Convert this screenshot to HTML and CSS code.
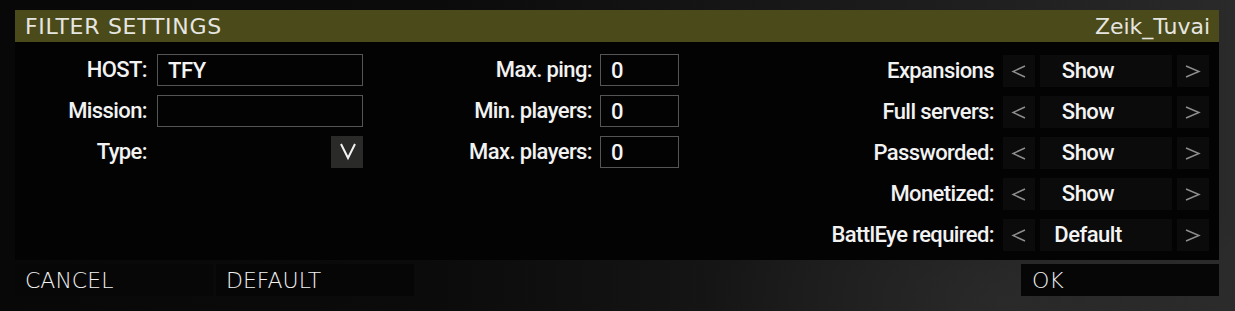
FILE: index.html
```html
<!DOCTYPE html>
<html>
<head>
<meta charset="utf-8">
<link rel="stylesheet" href="styles.css">
</head>
<body>
<div class="dialog">
  <div class="titlebar">
    <span class="title">FILTER SETTINGS</span>
    <span class="user">Zeik_Tuvai</span>
  </div>
  <div class="panel">
    <div class="group g1">
      <label class="lbl">HOST:</label>
      <input class="field" type="text" value="TFY">
      <label class="lbl">Mission:</label>
      <input class="field" type="text" value="">
      <label class="lbl">Type:</label>
      <div class="typecell">
        <button class="combo">
          <svg width="32" height="32" viewBox="0 0 32 32"><polyline points="10,8 17,22 24,8" fill="none" stroke="#f2f2f2" stroke-width="2"/></svg>
        </button>
      </div>
    </div>
    <div class="group g2">
      <label class="lbl">Max. ping:</label>
      <input class="field" type="text" value="0">
      <label class="lbl">Min. players:</label>
      <input class="field" type="text" value="0">
      <label class="lbl">Max. players:</label>
      <input class="field" type="text" value="0">
    </div>
    <div class="group g3">
      <label class="lbl">Expansions</label>
      <div class="selector">
        <span class="arrow"><svg width="32" height="32" viewBox="0 0 32 32"><polyline points="22,11 10,16.5 22,22" fill="none" stroke="#8e8e8e" stroke-width="1.4"/></svg></span>
        <span class="value">Show</span>
        <span class="arrow"><svg width="32" height="32" viewBox="0 0 32 32"><polyline points="9,11 22,16.5 9,22" fill="none" stroke="#8e8e8e" stroke-width="1.4"/></svg></span>
      </div>
      <label class="lbl">Full servers:</label>
      <div class="selector">
        <span class="arrow"><svg width="32" height="32" viewBox="0 0 32 32"><polyline points="22,11 10,16.5 22,22" fill="none" stroke="#8e8e8e" stroke-width="1.4"/></svg></span>
        <span class="value">Show</span>
        <span class="arrow"><svg width="32" height="32" viewBox="0 0 32 32"><polyline points="9,11 22,16.5 9,22" fill="none" stroke="#8e8e8e" stroke-width="1.4"/></svg></span>
      </div>
      <label class="lbl">Passworded:</label>
      <div class="selector">
        <span class="arrow"><svg width="32" height="32" viewBox="0 0 32 32"><polyline points="22,11 10,16.5 22,22" fill="none" stroke="#8e8e8e" stroke-width="1.4"/></svg></span>
        <span class="value">Show</span>
        <span class="arrow"><svg width="32" height="32" viewBox="0 0 32 32"><polyline points="9,11 22,16.5 9,22" fill="none" stroke="#8e8e8e" stroke-width="1.4"/></svg></span>
      </div>
      <label class="lbl">Monetized:</label>
      <div class="selector">
        <span class="arrow"><svg width="32" height="32" viewBox="0 0 32 32"><polyline points="22,11 10,16.5 22,22" fill="none" stroke="#8e8e8e" stroke-width="1.4"/></svg></span>
        <span class="value">Show</span>
        <span class="arrow"><svg width="32" height="32" viewBox="0 0 32 32"><polyline points="9,11 22,16.5 9,22" fill="none" stroke="#8e8e8e" stroke-width="1.4"/></svg></span>
      </div>
      <label class="lbl">BattlEye required:</label>
      <div class="selector">
        <span class="arrow"><svg width="32" height="32" viewBox="0 0 32 32"><polyline points="22,11 10,16.5 22,22" fill="none" stroke="#8e8e8e" stroke-width="1.4"/></svg></span>
        <span class="value">Default</span>
        <span class="arrow"><svg width="32" height="32" viewBox="0 0 32 32"><polyline points="9,11 22,16.5 9,22" fill="none" stroke="#8e8e8e" stroke-width="1.4"/></svg></span>
      </div>
    </div>
  </div>
  <div class="actions">
    <button class="btn btn-cancel">CANCEL</button>
    <button class="btn btn-default">DEFAULT</button>
    <span class="spacer"></span>
    <button class="btn btn-ok">OK</button>
  </div>
</div>
</body>
</html>
```
FILE: styles.css
```css
* { box-sizing: border-box; }
html, body { margin: 0; padding: 0; }
body {
  width: 1235px;
  height: 311px;
  overflow: hidden;
  background:
    radial-gradient(ellipse 420px 200px at 1000px 300px, rgba(60,60,60,0.35), rgba(0,0,0,0) 70%),
    linear-gradient(90deg, #080808 0%, #0b0b0b 35%, #161616 60%, #222222 85%, #2a2a2a 100%);
  font-family: Roboto, "Liberation Sans", sans-serif;
  color: #f2f2f2;
}
.dialog {
  padding: 10px 16px 0 15px;
}
.titlebar {
  height: 32px;
  background: #4b4a1a;
  display: flex;
  align-items: center;
  justify-content: space-between;
  padding: 0 9px 0 10px;
  font-family: "DejaVu Sans", sans-serif;
  font-size: 22px;
  color: #e6e6e0;
}
.title { letter-spacing: 0.7px; }
.panel {
  height: 218px;
  background: #030303;
  display: flex;
  padding: 12px 10px 10px 0;
}
.group {
  display: grid;
  row-gap: 9px;
  grid-auto-rows: 32px;
  align-content: start;
}
.g1 { grid-template-columns: 132px 206px; column-gap: 10px; }
.g2 { grid-template-columns: 229px 79px; column-gap: 8px; }
.g3 { grid-template-columns: 315px 206px; column-gap: 9px; margin-top: 1px; }
.lbl {
  font-size: 22px;
  font-weight: 500;
  letter-spacing: -0.6px;
  text-align: right;
  line-height: 32px;
  white-space: nowrap;
  color: #f2f2f2;
}
.field {
  height: 32px;
  width: 100%;
  margin: 0;
  border: 1px solid #555555;
  background: transparent;
  color: #f4f4f4;
  font-family: Roboto, "Liberation Sans", sans-serif;
  font-size: 22px;
  font-weight: 500;
  letter-spacing: -0.4px;
  padding: 0 0 0 10px;
  outline: none;
}
.typecell {
  display: flex;
  justify-content: flex-end;
}
.combo {
  width: 32px;
  height: 32px;
  padding: 0;
  border: 0;
  background: #2a2b28;
  display: block;
}
.combo svg, .arrow svg { display: block; }
.selector {
  display: flex;
  gap: 5px;
}
.arrow {
  width: 32px;
  height: 32px;
  background: #0b0b0b;
}
.value {
  width: 132px;
  height: 32px;
  background: #0b0b0b;
  font-size: 22px;
  font-weight: 500;
  letter-spacing: -0.5px;
  line-height: 32px;
  text-align: center;
  padding-right: 36px;
  color: #f4f4f4;
}
.actions {
  display: flex;
  margin-top: 4px;
  height: 32px;
  gap: 3px;
}
.spacer { flex: 1; }
.btn {
  width: 198px;
  height: 32px;
  border: 0;
  margin: 0;
  padding: 0 0 0 10px;
  text-align: left;
  font-family: "DejaVu Sans", sans-serif;
  font-weight: 200;
  font-size: 22px;
  color: #f2f2f2;
  background: #060606;
}
.btn-cancel { background: #070707; }
.btn-ok { padding-left: 11px; }
```
